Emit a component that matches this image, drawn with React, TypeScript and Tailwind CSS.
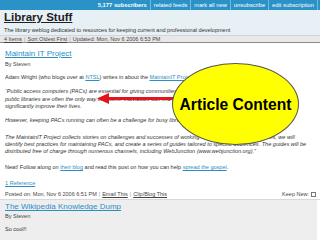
const L = "text-[#2b8fc4] underline";

export default function App() {
  return (
    <div className="relative w-[320px] h-[240px] overflow-hidden bg-white flex flex-col font-['Liberation_Sans',Arial,sans-serif] text-[#333]">
      {/* top bar */}
      <div className="h-[10px] bg-[#2a92c6] flex justify-end items-stretch text-white text-[5.8px] leading-[10px] shrink-0">
        <div className="font-bold px-[3px]">5,177 subscribers</div>
        <div className="px-[3px] border-l border-[#74b9dc]">related feeds</div>
        <div className="px-[3px] border-l border-[#74b9dc]">mark all new</div>
        <div className="px-[3px] border-l border-[#74b9dc]">unsubscribe</div>
        <div className="px-[3px] border-l border-r border-[#74b9dc] mr-[2px]">edit subscription</div>
      </div>
      {/* header */}
      <div className="bg-[#e7f0f5] pl-[4px] h-[25px] shrink-0">
        <div className="mt-[1px] h-[13px] leading-[13px] text-[11.5px] font-bold text-[#222] underline">Library Stuff</div>
        <div className="mt-[3px] h-[7px] leading-[7px] text-[5.55px] text-[#333] whitespace-nowrap">
          The library weblog dedicated to resources for keeping current and professional development
        </div>
      </div>
      {/* toolbar */}
      <div className="h-[8px] bg-[#e8e8e8] border-t border-[#d4d4d4] border-b border-b-[#8a8a8a] pl-[4px] text-[5.5px] leading-[6px] text-[#444] whitespace-nowrap shrink-0 flex items-center">
        <span className="underline">4 Items</span>
        <span className="mx-[2px] text-[#999]">|</span>
        <span className="underline">Sort Oldest First</span>
        <span className="mx-[2px] text-[#999]">|</span>
        <span>Updated: Mon, Nov 6 2006 6:53 PM</span>
      </div>
      {/* article */}
      <div className="px-[5px] text-[5.55px] whitespace-nowrap shrink-0">
        <div className={`mt-[6px] h-[10px] leading-[10px] text-[8px] ${L}`}>Maintain IT Project</div>
        <div className="mt-[1.5px] h-[7px] leading-[7px] text-[#444]">By Steven</div>
        <div className="mt-[6px] h-[7px] leading-[7px]">
          Adam Wright (who blogs over at <span className={L}>NTSL</span>) writes in about the <span className={L}>MaintainIT Project</span>:
        </div>
        <div className="mt-[7.5px] italic">
          <div className="h-[7.6px] leading-[7.6px]">“Public access computers (PACs) are essential for giving communities access to information. The PACs in</div>
          <div className="h-[7.6px] leading-[7.6px]">public libraries are often the only way that some individuals can find information that can</div>
          <div className="h-[7.6px] leading-[7.6px]">significantly improve their lives.</div>
        </div>
        <div className="mt-[6px] h-[7px] leading-[7px] italic">However, keeping PACs running can often be a challenge for busy library staff.</div>
        <div className="mt-[10.4px] italic">
          <div className="h-[7px] leading-[7px]">The MaintainIT Project collects stories on challenges and successes of working with PACs. From these stories, we will</div>
          <div className="h-[7px] leading-[7px]">identify best practices for maintaining PACs, and create a series of guides tailored to specific audiences. The guides will be</div>
          <div className="h-[7px] leading-[7px]">distributed free of charge through numerous channels, including WebJunction (www.webjunction.org).”</div>
        </div>
        <div className="mt-[9px] h-[7px] leading-[7px]">
          Neat! Follow along on <span className={L}>their blog</span> and read this post on how you can help <span className={L}>spread the gospel</span>.
        </div>
        <div className={`mt-[9.3px] h-[7px] leading-[7px] ${L}`}>1 Reference</div>
      </div>
      <div className="mt-[4px] h-[9px] border-b border-[#d8d8d8] pl-[5px] pr-[4px] text-[5.5px] leading-[7px] text-[#444] whitespace-nowrap flex items-start justify-between shrink-0">
        <div>
          Posted on: Mon, Nov 6 2006 6:51 PM<span className="mx-[2px] text-[#999]">|</span><span className="underline">Email This</span>
          <span className="mx-[2px] text-[#999]">|</span><span className="underline">Clip/Blog This</span>
        </div>
        <div className="flex items-center gap-[2px] h-[7px]">
          <span>Keep New:</span>
          <span className="w-[5px] h-[5px] border border-[#777] bg-white inline-block" />
        </div>
      </div>
      <div className="flex-1 bg-[#eeeeee] mr-[3px] px-[5px] text-[5.55px] whitespace-nowrap">
        <div className={`mt-[2px] h-[10px] leading-[10px] text-[8px] ${L}`}>The Wikipedia Knowledge Dump</div>
        <div className="mt-[0.5px] h-[7px] leading-[7px] text-[#444]">By Steven</div>
        <div className="mt-[6px] h-[7px] leading-[7px]">So cool!!</div>
      </div>

      {/* red arrow overlay */}
      <svg className="absolute left-[97px] top-[92px]" width="90" height="13" viewBox="0 0 90 13">
        <rect x="10" y="5" width="80" height="3" fill="#e3151c" />
        <polygon points="0,6.5 12,1 12,12" fill="#e3151c" />
      </svg>
      {/* callout ellipse */}
      <div className="absolute left-[172px] top-[63px] w-[127px] h-[82px] rounded-[50%] bg-[#ffff00] border border-[#555] flex items-center justify-center">
        <span className="text-[15.6px] font-bold text-black leading-none mt-[1px] whitespace-nowrap">Article Content</span>
      </div>
    </div>
  );
}
